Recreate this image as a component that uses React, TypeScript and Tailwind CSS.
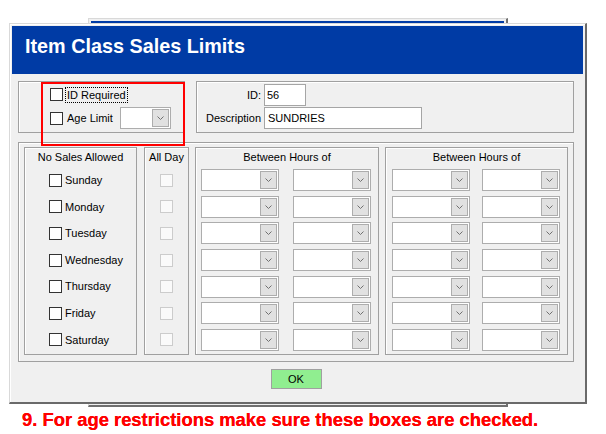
import React from 'react';

const days = ['Sunday', 'Monday', 'Tuesday', 'Wednesday', 'Thursday', 'Friday', 'Saturday'];

function Check({ disabled = false }: { disabled?: boolean }) {
  return (
    <div
      className={`w-[13px] h-[13px] flex-shrink-0 border ${
        disabled ? 'border-[#cccccc] bg-[#fafafa]' : 'border-[#333333] bg-white'
      }`}
    />
  );
}

function Combo({ className = 'w-[78px]' }: { className?: string }) {
  return (
    <div className={`h-[22px] flex justify-end p-[1px] border border-[#adadad] bg-white ${className}`}>
      <div className="w-[17px] h-full flex items-center justify-center border border-[#adadad] bg-[#e1e1e1]">
        <svg width="7" height="4" viewBox="0 0 7 4">
          <path d="M0.5 0.5 L3.5 3.5 L6.5 0.5" fill="none" stroke="#707070" strokeWidth="1" />
        </svg>
      </div>
    </div>
  );
}

function Group({ className, children }: { className: string; children: React.ReactNode }) {
  return (
    <div className={`border border-[#a0a0a0] shadow-[inset_1px_1px_0_#ffffff] ${className}`}>
      {children}
    </div>
  );
}

function GroupTitle({ children }: { children: React.ReactNode }) {
  return <div className="h-[19px] flex items-center justify-center">{children}</div>;
}

function HoursBox({ second = false }: { second?: boolean }) {
  return (
    <Group className={`h-[208px] ${second ? 'w-[183px]' : 'w-[184px]'}`}>
      <GroupTitle>Between Hours of</GroupTitle>
      <div className={second ? 'pl-[6px]' : 'pl-[5px]'}>
        {days.map((d) => (
          <div key={d} className={`h-[26.6px] flex items-center ${second ? 'gap-[12px]' : 'gap-[14px]'}`}>
            <Combo />
            <Combo />
          </div>
        ))}
      </div>
    </Group>
  );
}

export default function App() {
  return (
    <div className="relative w-[606px] h-[434px] bg-white overflow-hidden font-['Liberation_Sans',Arial,sans-serif] text-[11px] text-black">
      {/* window behind */}
      <div className="absolute left-[88px] top-[18px] w-[420px] h-[389px] border-t border-l border-t-[#d9d9d9] border-l-[#d9d9d9] border-r-2 border-b-2 border-r-[#707070] border-b-[#707070] bg-[#f0f0f0] p-[2px]">
        <div className="h-[48px] bg-[#003ba5]" />
      </div>

      {/* dialog */}
      <div className="absolute left-[9px] top-[23px] w-[578px] h-[381px] flex flex-col border-t border-l border-t-[#d9d9d9] border-l-[#d9d9d9] border-r-2 border-b-2 border-r-[#6a6a6a] border-b-[#6a6a6a] bg-[#f0f0f0] shadow-[inset_1px_1px_0_#ffffff]">
        <div className="mx-[2px] mt-[2px] h-[48px] bg-[#003ba5] pl-[13px] pt-[8px]">
          <div className="text-white font-bold text-[19.8px] leading-[24px]">Item Class Sales Limits</div>
        </div>

        <div className="flex flex-col pl-[8px] pr-[11px] pt-[7px]">
          {/* top row */}
          <div className="flex h-[52px] gap-[11px]">
            <Group className="w-[167px] h-full pl-[31px] pt-[4px]">
              <div className="flex items-center h-[17px] gap-[2px]">
                <Check />
                <span className="h-[16px] px-[1px] leading-[14px] border border-dotted border-black">ID Required</span>
              </div>
              <div className="flex items-center h-[22px] mt-[4px] gap-[2px]">
                <Check />
                <span className="w-[53px] px-[1px] border border-transparent">Age Limit</span>
                <Combo className="w-[51px]" />
              </div>
            </Group>
            <Group className="flex-1 h-full pl-[9px] pt-[2px]">
              <div className="grid grid-cols-[55px_auto] gap-x-[3px] gap-y-[1px] items-center w-max">
                <span className="text-right">ID:</span>
                <div className="w-[42px] h-[22px] flex items-center pl-[2px] border border-[#a5a5a5] bg-white">56</div>
                <span className="text-right">Description</span>
                <div className="w-[158px] h-[22px] flex items-center pl-[3px] border border-[#a5a5a5] bg-white">SUNDRIES</div>
              </div>
            </Group>
          </div>

          {/* days */}
          <Group className="mt-[9px] h-[220px] flex gap-[6px] px-[5px] pt-[4px]">
            <Group className="w-[113px] h-[208px] mr-[1px]">
              <GroupTitle>No Sales Allowed</GroupTitle>
              {days.map((d) => (
                <div key={d} className="h-[26.6px] flex items-center gap-[3px] pl-[24px]">
                  <Check />
                  <span>{d}</span>
                </div>
              ))}
            </Group>
            <Group className="w-[45px] h-[208px]">
              <GroupTitle>All Day</GroupTitle>
              {days.map((d) => (
                <div key={d} className="h-[26.6px] flex items-center justify-center">
                  <Check disabled />
                </div>
              ))}
            </Group>
            <HoursBox />
            <HoursBox second />
          </Group>

          <button className="self-center mt-[7px] w-[51px] h-[20px] flex items-center justify-center border border-[#a0a0a0] bg-[#90ee90] text-[11px]">
            OK
          </button>
        </div>
      </div>

      {/* annotation */}
      <div className="absolute left-[41px] top-[82px] w-[144px] h-[64px] border-2 border-[#ff0000]" />
      <div className="absolute left-[22px] top-[411px] whitespace-nowrap font-bold text-[18.4px] leading-none text-[#ff0000] [text-shadow:0_0_0.6px_#ff0000]">
        9. For age restrictions make sure these boxes are checked.
      </div>
    </div>
  );
}
